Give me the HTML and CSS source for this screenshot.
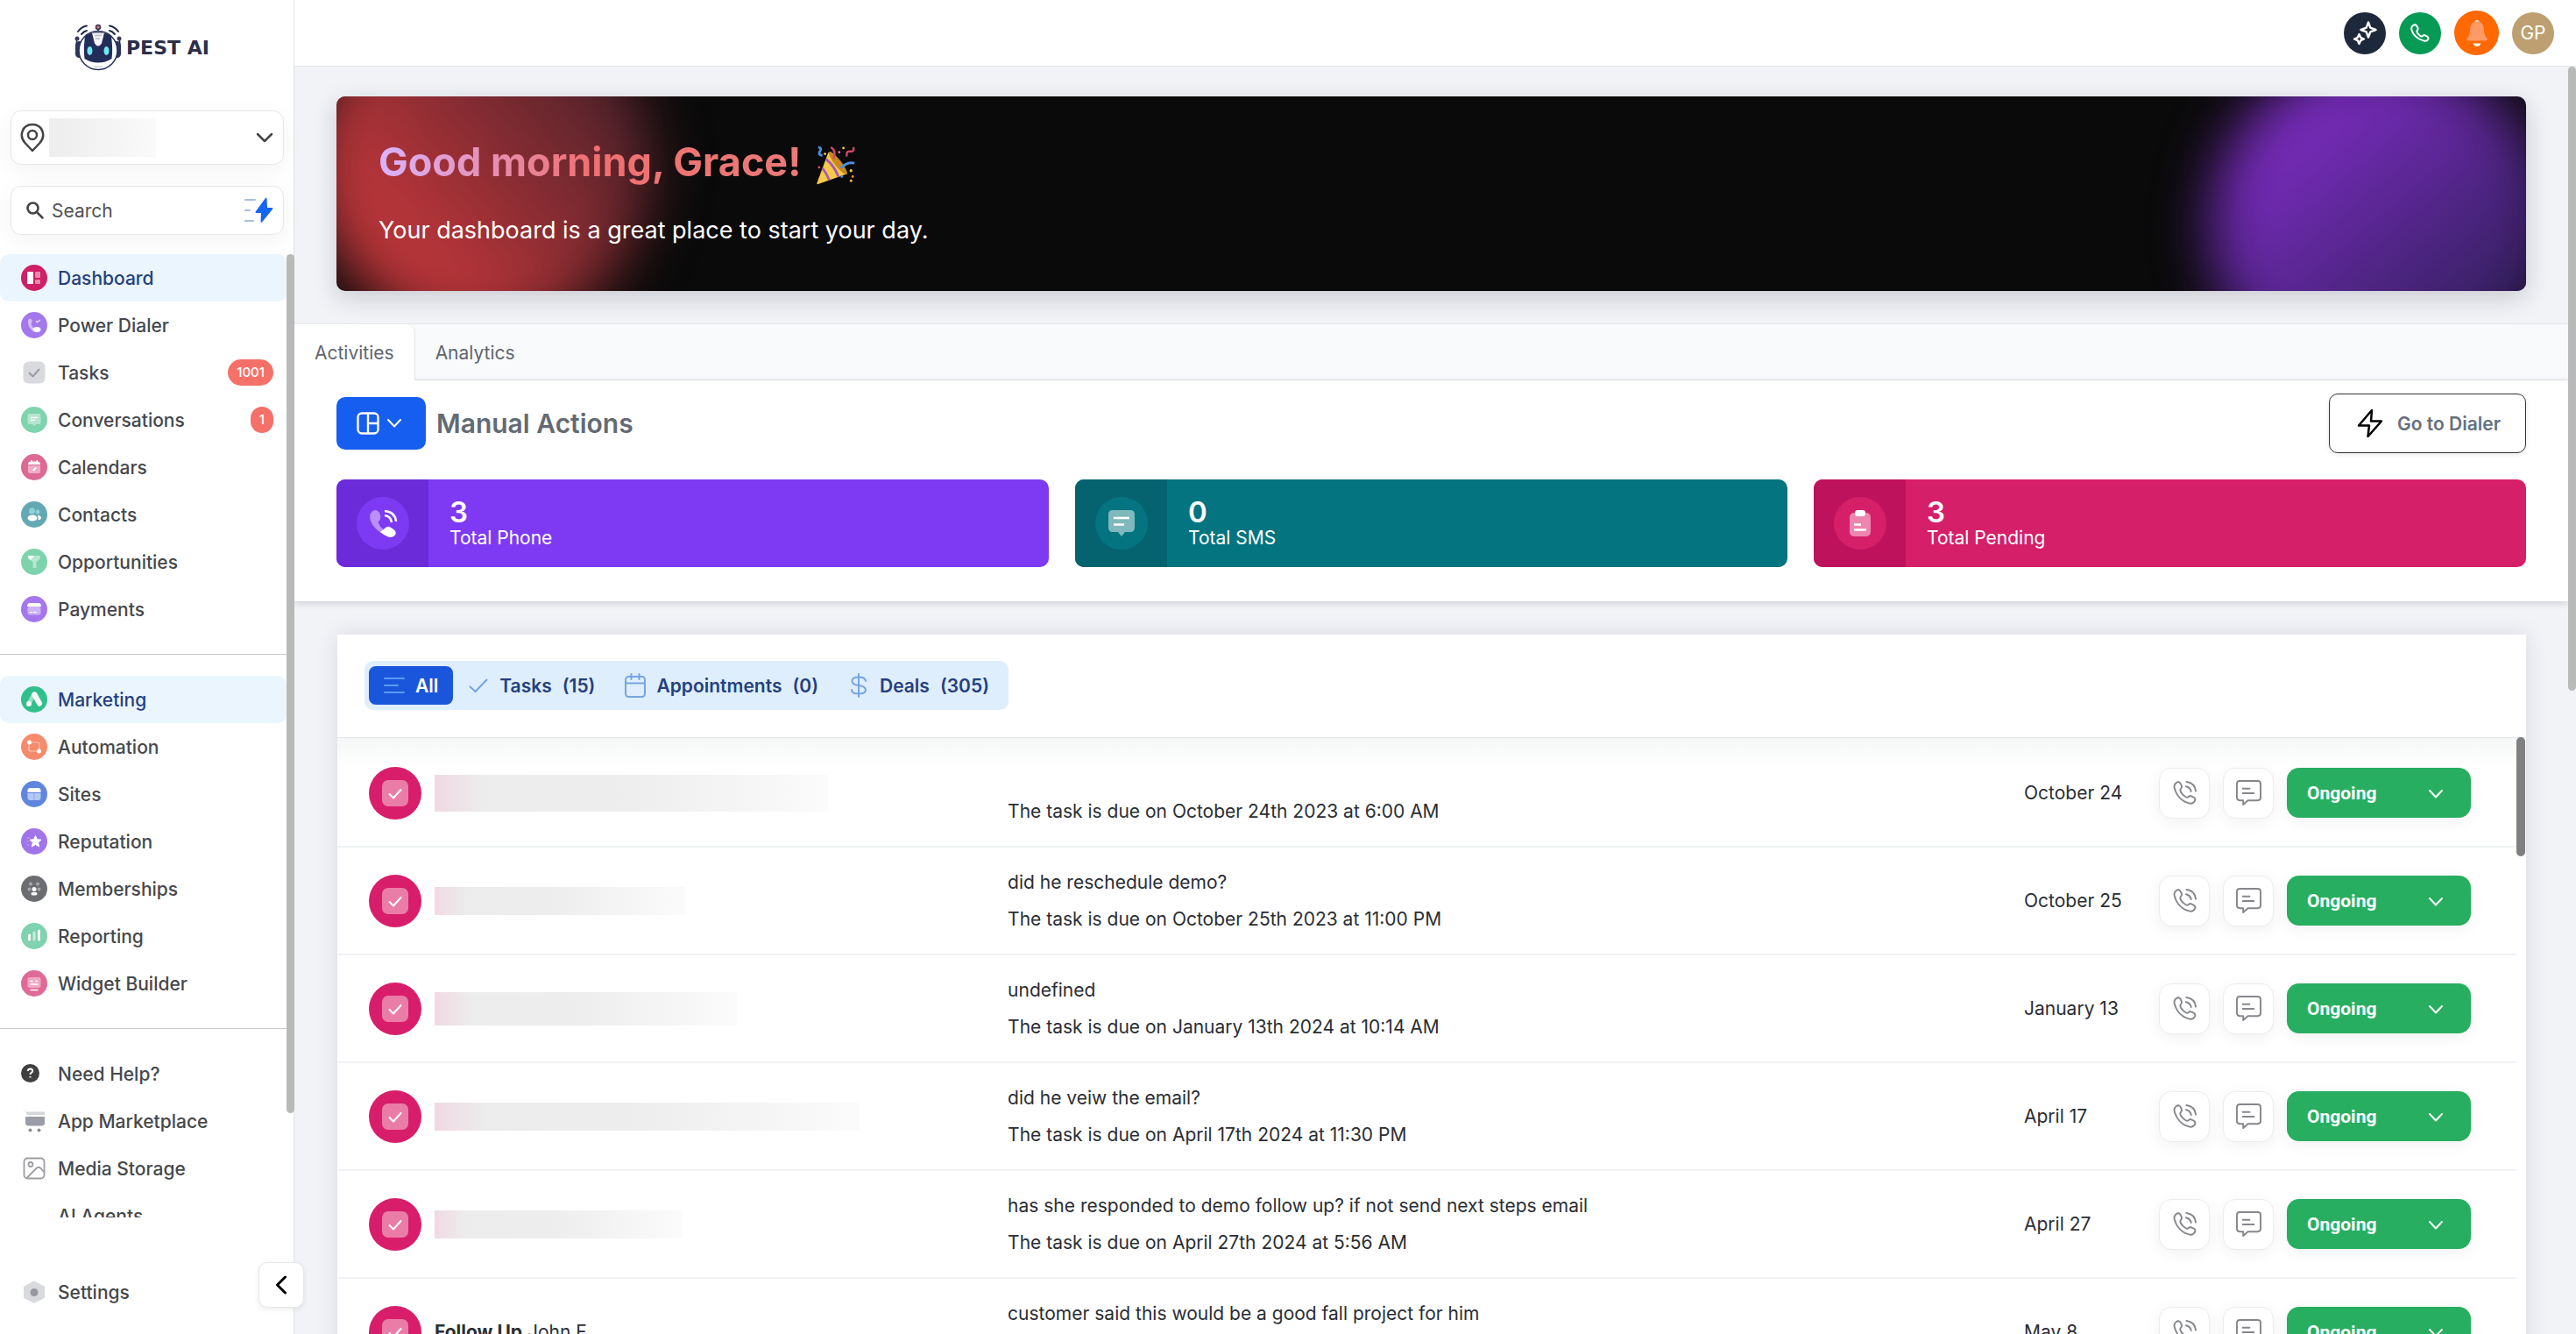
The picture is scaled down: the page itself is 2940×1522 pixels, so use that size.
FILE: index.html
```html
<!DOCTYPE html>
<html lang="en">
<head>
    <meta charset="UTF-8">
    <meta name="viewport" content="width=device-width, initial-scale=1.0">
    <title>Pest AI - Dashboard</title>
    <link rel="stylesheet" href="styles.css">
</head>
<body>
    <!-- Shared icons -->
    <svg class="sprite" aria-hidden="true">
        <symbol id="icon-task" viewBox="0 0 60 60">
            <circle cx="30" cy="30" r="30" fill="#d81e6b"/>
            <rect x="15" y="15" width="30" height="30" rx="7" fill="#ea7da7"/>
            <path d="M23.500 31l4.500 4.500 8.500-9.500" fill="none" stroke="#fff" stroke-width="2" stroke-linecap="round" stroke-linejoin="round"/>
        </symbol>
        <symbol id="icon-call" viewBox="0 0 30 30">
            <g fill="none" stroke="currentColor" stroke-width="2" stroke-linecap="round" stroke-linejoin="round">
                <path d="M4.500 3.500C7 1.500 9 2 10.300 4.800l1 2.300c.6 1.500-.3 2.300-1.200 3.300-.8 1-.6 2 0 3.300 1.300 2.700 3.400 4.800 6 6.200 1.300.7 2.300.8 3.200 0 1-.9 1.900-1.600 3.300-1l2.300 1.100c2.800 1.300 3.200 3.400 1.200 5.800-1.300 1.500-3.200 2.200-5.200 1.700C11.800 25.500 5 18.500 2.700 8.800c-.4-2 .3-4 1.800-5.300z"/>
                <path d="M17 2c6 .8 10.200 5 11 11M16.500 7.500c3.400.7 5.300 2.700 6 6"/>
            </g>
        </symbol>
        <symbol id="icon-chat" viewBox="0 0 30 30">
            <g fill="none" stroke="currentColor" stroke-width="2" stroke-linecap="round" stroke-linejoin="round">
                <path d="M4.500 1h21Q29 1 29 4.500v16q0 3.500-3.500 3.500H14l-5.500 5v-5h-4Q1 24 1 20.500v-16Q1 1 4.500 1z"/>
                <path d="M8 10h8M8 15.500h13"/>
            </g>
        </symbol>
        <symbol id="icon-down" viewBox="0 0 18 12">
            <path d="M2 2l7 7.500L16 2" fill="none" stroke="currentColor" stroke-width="2" stroke-linecap="round" stroke-linejoin="round"/>
        </symbol>
    </svg>

    <aside class="sidebar">
        <div class="logo">
            <svg width="54" height="54" viewBox="0 0 54 54" aria-hidden="true">
                <g fill="none" stroke="#232b4d" stroke-width="2" stroke-linecap="round">
                    <path d="M4 9Q8 3.500 14 2.500M8 12q3-3.500 6-4M50 9Q46 3.500 40 2.500M46 12q-3-3.500-6-4"/>
                    <path d="M2.500 17v6M51.500 17v6M27 5v4" stroke-width="1.500"/>
                </g>
                <circle cx="27" cy="4" r="2.500" fill="#c97b6a" stroke="#3b3350" stroke-width="1.500"/>
                <circle cx="3" cy="17" r="2.500" fill="#3f3a58"/>
                <circle cx="51" cy="17" r="2.500" fill="#3f3a58"/>
                <rect x="1" y="20" width="9" height="19" rx="4.500" fill="#2b3560"/>
                <rect x="44" y="20" width="9" height="19" rx="4.500" fill="#2b3560"/>
                <ellipse cx="27" cy="30.500" rx="22" ry="22" fill="#fff" stroke="#2a3358" stroke-width="1.600"/>
                <path d="M12 14.500Q18 9.500 27 9.500T42 14.500Q44 28 42.500 40 35 44.500 27 44.500T11.500 40Q10 28 12 14.500z" fill="#232d59"/>
                <path d="M20 10.500h14l-3 12q-4 6-8 0z" fill="#f4f5f8"/>
                <path d="M23 13.500h8M24 17h5" stroke="#b9bdc9" stroke-width="1.500"/>
                <ellipse cx="17.500" cy="31" rx="3" ry="5" fill="#6fe6f0"/>
                <ellipse cx="36.500" cy="31" rx="3" ry="5" fill="#6fe6f0"/>
                <path d="M22 49h10" stroke="#c9ccd6" stroke-width="1.500"/>
            </svg>
            <span>PEST AI</span>
        </div>

        <button class="box location" aria-label="Switch location">
            <svg width="28" height="34" viewBox="0 0 28 34" fill="none" stroke="#454545" stroke-width="2.500" stroke-linejoin="round" aria-hidden="true">
                <path d="M14 32L5.500 23C-1.500 15.500 2 2 14 2s15.500 13.500 8.500 21z"/>
                <circle cx="14" cy="14" r="5"/>
            </svg>
            <span class="location-name"></span>
            <svg width="20" height="12" viewBox="0 0 20 12" fill="none" stroke="#454545" stroke-width="2.500" stroke-linecap="round" stroke-linejoin="round" aria-hidden="true"><path d="M2 2l8 8 8-8"/></svg>
        </button>

        <div class="box search">
            <svg width="20" height="20" viewBox="0 0 20 20" fill="none" stroke="#454545" stroke-width="2.500" stroke-linecap="round" aria-hidden="true"><circle cx="7.500" cy="7.500" r="6"/><path d="M12 12l6.500 6.500"/></svg>
            <input type="text" placeholder="Search" aria-label="Search">
            <button class="quick" aria-label="Quick actions">
                <svg width="34" height="30" viewBox="0 0 34 30" aria-hidden="true">
                    <path d="M2 3h11M2 15h5M2 27h9" stroke="#a9bdd8" stroke-width="2" stroke-linecap="round"/>
                    <path d="M25 1q1-1 1.500.5L27 12h5.500q1.500.3.7 1.500L21 28.500q-1.300.8-1.500-.5L20 18h-5.500q-1.600-.4-.8-1.600z" fill="#1266f1"/>
                </svg>
            </button>
        </div>

        <div class="menu-wrap">
            <nav class="menu">
                <a href="#" class="active">
                    <svg viewBox="0 0 30 30"><circle cx="15" cy="15" r="15" fill="#cf1f66"/><rect x="7" y="8" width="7" height="14" rx="1" fill="#fff"/><rect x="16" y="8" width="6" height="7" rx="1" fill="#ea87af"/><rect x="16" y="17" width="6" height="5" rx="1" fill="#ea87af"/></svg>
                    Dashboard
                </a>
                <a href="#">
                    <svg viewBox="0 0 30 30"><circle cx="15" cy="15" r="15" fill="#a477ee"/><path d="M8 9q3-3 4.500.5.800 2-1 3.500Q12 17 15.500 19l-1 3Q7 18 8 9z" fill="#d4bef8"/><ellipse cx="18" cy="20" rx="4.500" ry="3" fill="#fff"/><path d="M17 10l1.500 1.500L22 9" fill="none" stroke="#e6d9fc" stroke-width="1.500"/></svg>
                    Power Dialer
                </a>
                <a href="#">
                    <svg viewBox="0 0 30 30"><rect x="2.500" y="2.500" width="25" height="25" rx="6" fill="#d9dade"/><path d="M9.500 15.500l4 4 7-8" fill="none" stroke="#9a9ca3" stroke-width="2" stroke-linecap="round" stroke-linejoin="round"/></svg>
                    Tasks
                    <span class="badge">1001</span>
                </a>
                <a href="#">
                    <svg viewBox="0 0 30 30"><circle cx="15" cy="15" r="15" fill="#7fd3ae"/><path d="M10 8h10q2.500 0 2.500 2.500v7Q22.500 20 20 20h-3l-2 2-2-2h-3q-2.500 0-2.500-2.500v-7Q7.500 8 10 8z" fill="#b3e6cf"/><path d="M11 12.500h8M11 15.500h5" stroke="#fff" stroke-width="1.500"/></svg>
                    Conversations
                    <span class="badge">1</span>
                </a>
                <a href="#">
                    <svg viewBox="0 0 30 30"><circle cx="15" cy="15" r="15" fill="#dc6a94"/><path d="M8 13h14v7q0 2-2 2H10q-2 0-2-2z" fill="#eeadc5"/><path d="M8 12q0-3.500 3-3.500h8q3 0 3 3.500zM11 7h1.500v3H11zM17.500 7H19v3h-1.500z" fill="#fff"/><path d="M14 19l3-3.500" stroke="#fff" stroke-width="2"/></svg>
                    Calendars
                </a>
                <a href="#">
                    <svg viewBox="0 0 30 30"><circle cx="15" cy="15" r="15" fill="#63a9b4"/><circle cx="12.500" cy="11" r="3.500" fill="#8fd0da"/><circle cx="19" cy="12" r="2.500" fill="#8fd0da"/><ellipse cx="13" cy="19" rx="5.500" ry="3.500" fill="#fff"/><path d="M19 15.500q4.500 1.500 4 3.500t-3.500 2.500q.500-3-.5-6z" fill="#fff"/></svg>
                    Contacts
                </a>
                <a href="#">
                    <svg viewBox="0 0 30 30"><circle cx="15" cy="15" r="15" fill="#7dd3ac"/><path d="M8 8h14l-.5 4-4 3v7h-4v-7L9 12z" fill="#b5e8d0"/><path d="M8 8h7l-4 5-2.500-2z" fill="#fff"/></svg>
                    Opportunities
                </a>
                <a href="#">
                    <svg viewBox="0 0 30 30"><circle cx="15" cy="15" r="15" fill="#a477ee"/><rect x="7.500" y="12" width="15" height="9.500" rx="2.500" fill="#cdb4f7"/><path d="M7 12q0-4 3-4h10q3 0 3 4z" fill="#fff"/><path d="M10 18.500h3M14 18.500h4" stroke="#fff"/></svg>
                    Payments
                </a>
                <hr>
                <a href="#" class="active">
                    <svg viewBox="0 0 30 30"><circle cx="15" cy="15" r="15" fill="#31c08c"/><path d="M15 9L9.500 18.500" stroke="#98e0c6" stroke-width="5" stroke-linecap="round"/><path d="M15.500 9.500l5.500 10" stroke="#fff" stroke-width="6" stroke-linecap="round"/><circle cx="9" cy="20" r="3" fill="#fff"/></svg>
                    Marketing
                </a>
                <a href="#">
                    <svg viewBox="0 0 30 30"><circle cx="15" cy="15" r="15" fill="#f58b6c"/><path d="M9 10v8q0 2 2 2h8M11 10h8q2 0 2 2v8" fill="none" stroke="#fbc5b5" stroke-width="1.200"/><circle cx="9.500" cy="10" r="2.500" fill="#fff"/><circle cx="20.500" cy="20" r="2.500" fill="#fff"/></svg>
                    Automation
                </a>
                <a href="#">
                    <svg viewBox="0 0 30 30"><circle cx="15" cy="15" r="15" fill="#5f86de"/><path d="M7.500 14h15v5q0 3-3 3h-9q-3 0-3-3z" fill="#b4c8f2"/><path d="M7.500 13v-2q0-3 3-3h9q3 0 3 3v2z" fill="#fff"/><path d="M15 14v8" stroke="#8ea9e8"/></svg>
                    Sites
                </a>
                <a href="#">
                    <svg viewBox="0 0 30 30"><circle cx="15" cy="15" r="15" fill="#a075ea"/><path d="M16.500 8.500l1.900 4.200 4.600.5-3.400 3.100 1 4.600-4.100-2.400-4.100 2.400 1-4.600-3.400-3.100 4.600-.5z" fill="#fff" stroke="#fff" stroke-linejoin="round"/><path d="M7 11h3M6.500 15h2M7 19h2.500" stroke="#c5a9f5"/></svg>
                    Reputation
                </a>
                <a href="#">
                    <svg viewBox="0 0 30 30"><circle cx="15" cy="15" r="15" fill="#6c6d70"/><g fill="#a6a7aa"><circle cx="11" cy="9.500" r="2"/><circle cx="19" cy="9.500" r="2"/><circle cx="9.500" cy="15.500" r="2"/><circle cx="20.500" cy="15.500" r="2"/></g><circle cx="15" cy="15.500" r="2.500" fill="#fff"/><rect x="11.500" y="19" width="7" height="3.500" rx="1.700" fill="#fff"/></svg>
                    Memberships
                </a>
                <a href="#">
                    <svg viewBox="0 0 30 30"><circle cx="15" cy="15" r="15" fill="#80d2b0"/><path d="M9.500 14v5" stroke="#fff" stroke-width="3" stroke-linecap="round"/><path d="M15 11v8" stroke="#c6eddc" stroke-width="3" stroke-linecap="round"/><path d="M20.500 9v10" stroke="#fff" stroke-width="3" stroke-linecap="round"/></svg>
                    Reporting
                </a>
                <a href="#">
                    <svg viewBox="0 0 30 30"><circle cx="15" cy="15" r="15" fill="#df6a97"/><rect x="7.500" y="8" width="15" height="12" rx="2.500" fill="#efa7c2"/><path d="M10.500 12.500h3M16 12.500h3M10.500 16h9M10.500 22.500h9" stroke="#fff" stroke-width="1.500"/></svg>
                    Widget Builder
                </a>
                <hr>
                <a href="#">
                    <svg viewBox="0 0 30 30"><circle cx="10.500" cy="14.500" r="10.500" fill="#404040"/><path d="M7.800 12q.2-2.500 2.700-2.500t2.700 2.300q0 1.300-1.500 2.200-1.200.6-1.200 2M10.500 18v1.500" fill="none" stroke="#fff" stroke-width="2"/></svg>
                    Need Help?
                </a>
                <a href="#">
                    <svg viewBox="0 0 30 30"><path d="M2 2.500h2q1.500.500 2 2.500l.5 3H27V4.500H7" fill="#d3d5d9"/><path d="M5 10h22v7q0 3.500-3.500 3.500h-15Q5 20.500 5 17z" fill="#9a9ca8"/><circle cx="10.500" cy="25.500" r="2" fill="#8a8c92"/><circle cx="20.500" cy="25.500" r="2" fill="#8a8c92"/></svg>
                    App Marketplace
                </a>
                <a href="#">
                    <svg viewBox="0 0 30 30" fill="none" stroke="#9c9da1" stroke-width="1.800"><rect x="3.500" y="3.500" width="23" height="23" rx="4"/><circle cx="11" cy="10.500" r="2.500"/><path d="M6.500 26L18 14.500q2-1.500 4 0l4.500 5"/></svg>
                    Media Storage
                </a>
                <a href="#">
                    <svg viewBox="0 0 30 30"></svg>
                    AI Agents
                </a>
            </nav>
            <div class="scroll-thumb menu-thumb"></div>
        </div>

        <div class="menu settings">
            <a href="#">
                <svg viewBox="0 0 30 30"><path d="M15 3l11.500 6v12.500L15 27.500 3.500 21.500V9z" fill="#d9dade" stroke="#d9dade" stroke-linejoin="round"/><circle cx="15" cy="15.500" r="4.500" fill="#98999e"/></svg>
                Settings
            </a>
        </div>
        <button class="collapse" aria-label="Collapse sidebar">
            <svg width="14" height="22" viewBox="0 0 14 22" fill="none" stroke="#000" stroke-width="3" stroke-linecap="round" stroke-linejoin="round"><path d="M11.500 2L2.500 11l9 9"/></svg>
        </button>
    </aside>

    <div class="main">
        <header class="topbar">
            <button class="round dark" aria-label="AI assistant">
                <svg width="28" height="28" viewBox="0 0 28 28" fill="none" stroke="#fff" stroke-width="2.400" stroke-linejoin="round"><path d="M18 1.500l2.300 6.200L26.500 10l-6.200 2.300L18 18.500l-2.300-6.200L9.500 10l6.200-2.300zM7.500 15l1.700 3.800L13 20.500l-3.800 1.700L7.500 26l-1.700-3.800L2 20.500l3.800-1.700z"/></svg>
            </button>
            <button class="round green" aria-label="Phone">
                <svg width="22" height="22" viewBox="0 0 22 22" fill="none" stroke="#fff" stroke-width="2" stroke-linejoin="round"><path d="M3 2q3-2 4.500 1l1 2q.6 1.500-.8 2.700Q7 9 8 10.500q1.500 2.500 4 3.800 1.300.7 2.300-.4 1-1.200 2.400-.6l2.300 1.200q2.500 1.500.8 3.800-1.600 2-4.300 1.300Q4 16.500 1.200 6.500.8 3.500 3 2z"/></svg>
            </button>
            <button class="round orange" aria-label="Notifications">
                <svg width="26" height="32" viewBox="0 0 26 32"><path d="M13 1q2.500 0 2.500 1.800Q21 5 21 12q0 6 3.500 10 .8 2.500-2 2.500h-19q-2.800 0-2-2.500Q5 18 5 12q0-7 5.500-9.200Q10.500 1 13 1z" fill="#ff9a66"/><path d="M10.500 2.500Q11 1 13 1t2.500 1.500zM8.500 27.500h9Q16 31 13 31t-4.500-3.500z" fill="#fff"/></svg>
            </button>
            <button class="round tan">GP</button>
        </header>

        <div class="page">
            <section class="banner">
                <div class="glow glow-red"></div>
                <div class="glow glow-purple"></div>
                <h1>
                    <span>Good morning, Grace!</span>
                    <svg width="46" height="46" viewBox="0 0 48 48" aria-hidden="true">
                        <path d="M15 8Q27 18 37 34L3 46q-2 .5-1.500-1.500z" fill="#f7c948"/>
                        <path d="M12 16q10 8 15 21M8 27q5 6 8 14" fill="none" stroke="#a75bb5" stroke-width="3"/>
                        <ellipse cx="26.500" cy="21" rx="4" ry="17" transform="rotate(-38 26.500 21)" fill="#c98a1c"/>
                        <path d="M3 2q5 1 2 5t3 5M30 27q7-8 16-6" fill="none" stroke="#4a8fe0" stroke-width="3"/>
                        <path d="M18 2q7 4 3 14M45 2q1 6-4 5t-4 6" fill="none" stroke="#d8486a" stroke-width="2.500"/>
                        <circle cx="11" cy="10" r="1.500" fill="#f7c948"/><circle cx="28" cy="8" r="1.500" fill="#ee6a9a"/><circle cx="4" cy="26" r="1.500" fill="#d8486a"/><circle cx="42" cy="30" r="1.700" fill="#f7c948"/><circle cx="44" cy="37" r="1.500" fill="#ee8a3a"/><circle cx="42" cy="42" r="1.500" fill="#f7c948"/><circle cx="33" cy="3" r="1.500" fill="#f7c948"/><circle cx="31" cy="37" r="1.500" fill="#4a8fe0"/>
                    </svg>
                </h1>
                <p>Your dashboard is a great place to start your day.</p>
            </section>

            <nav class="tabs">
                <a href="#" class="current">Activities</a>
                <a href="#">Analytics</a>
            </nav>

            <section class="actions">
                <div class="actions-head">
                    <button class="layout-btn" aria-label="Change layout">
                        <svg width="26" height="26" viewBox="0 0 26 26" fill="none" stroke="#fff" stroke-width="2.400"><rect x="1.500" y="1.500" width="23" height="23" rx="4.500"/><path d="M13 1.500v23M13 13h11.500"/></svg>
                        <svg width="18" height="12"><use href="#icon-down"/></svg>
                    </button>
                    <h2>Manual Actions</h2>
                    <button class="dialer-btn">
                        <svg width="30" height="34" viewBox="0 0 30 34" fill="none" stroke="#000" stroke-width="2.500" stroke-linejoin="round" aria-hidden="true"><path d="M17 2L2 19.500h12L12.500 32 28 14.500H16z"/></svg>
                        Go to Dialer
                    </button>
                </div>
                <div class="stats">
                    <div class="stat stat-phone">
                        <div class="stat-icon">
                            <svg viewBox="0 0 60 60"><path d="M16.500 18q3-4.500 7-2.500 3 2 4 7 0 3-3 6.500 2 5 6 8l-3 4Q15 32 15 22q0-2.500 1.500-4z" fill="#b98ff8"/><path d="M27 40l5.500-4.500q3-3 6-1l4.500 3q3.500 3.500 0 7-3.500 2.500-8 .5-5-2-8-5z" fill="#fff"/><path d="M32 16q12 1 13 12M32 21q7 1 8 8" fill="none" stroke="#fff" stroke-width="2.500"/></svg>
                        </div>
                        <div class="stat-text"><strong>3</strong><span>Total Phone</span></div>
                    </div>
                    <div class="stat stat-sms">
                        <div class="stat-icon">
                            <svg viewBox="0 0 60 60"><path d="M20 15h20q5 0 5 5v15q0 5-5 5h-6l-4 5-4-5h-6q-5 0-5-5V20q0-5 5-5z" fill="#7fb8bd"/><path d="M21 24h18M21 31.500h12" stroke="#fff" stroke-width="2.500"/></svg>
                        </div>
                        <div class="stat-text"><strong>0</strong><span>Total SMS</span></div>
                    </div>
                    <div class="stat stat-pending">
                        <div class="stat-icon">
                            <svg viewBox="0 0 60 60"><rect x="18" y="18" width="24" height="27" rx="5" fill="#ed86af"/><rect x="24" y="15" width="12" height="7" rx="3" fill="#fff"/><path d="M23 31.500h8M23 37.500h14" stroke="#fff" stroke-width="2.500"/></svg>
                        </div>
                        <div class="stat-text"><strong>3</strong><span>Total Pending</span></div>
                    </div>
                </div>
            </section>

            <section class="feed">
                <div class="feed-head">
                    <div class="filters">
                        <button class="selected">
                            <svg viewBox="0 0 24 24"><path d="M1 4h22M1 12h15M1 20h22" stroke="#5a9bf5" stroke-width="2" stroke-linecap="round"/></svg>
                            <span>All</span>
                        </button>
                        <button>
                            <svg viewBox="0 0 24 24" fill="none" stroke="#74a5e0" stroke-width="2"><path d="M2 13l6.500 6L22 5"/></svg>
                            <span>Tasks</span><span>(15)</span>
                        </button>
                        <button>
                            <svg viewBox="0 0 24 28" fill="none" stroke="#74a5e0" stroke-width="2" stroke-linecap="round"><rect x="1" y="4" width="22" height="23" rx="3.500"/><path d="M1 11.500h22M7.500 1v6M16.500 1v6"/></svg>
                            <span>Appointments</span><span>(0)</span>
                        </button>
                        <button>
                            <svg viewBox="0 0 24 28" fill="none" stroke="#74a5e0" stroke-width="2" stroke-linecap="round"><path d="M12 1v26M20 9q-.5-4.500-8-4.500T4.500 9q0 4 7.500 5t8 5q0 4.500-8 4.500T4 19"/></svg>
                            <span>Deals</span><span>(305)</span>
                        </button>
                    </div>
                </div>

                <ul class="tasks">
                    <li class="task">
                        <div class="who"><svg class="task-icon"><use href="#icon-task"/></svg><span class="hidden-name name-1"></span></div>
                        <div class="note"><p></p><p>The task is due on October 24th 2023 at 6:00 AM</p></div>
                        <time>October 24</time>
                        <div class="controls">
                            <button aria-label="Call"><svg><use href="#icon-call"/></svg></button>
                            <button aria-label="Message"><svg><use href="#icon-chat"/></svg></button>
                            <div class="status"><select aria-label="Status"><option>Ongoing</option><option>Done</option></select><svg><use href="#icon-down"/></svg></div>
                        </div>
                    </li>
                    <li class="task">
                        <div class="who"><svg class="task-icon"><use href="#icon-task"/></svg><span class="hidden-name name-2"></span></div>
                        <div class="note"><p>did he reschedule demo?</p><p>The task is due on October 25th 2023 at 11:00 PM</p></div>
                        <time>October 25</time>
                        <div class="controls">
                            <button aria-label="Call"><svg><use href="#icon-call"/></svg></button>
                            <button aria-label="Message"><svg><use href="#icon-chat"/></svg></button>
                            <div class="status"><select aria-label="Status"><option>Ongoing</option><option>Done</option></select><svg><use href="#icon-down"/></svg></div>
                        </div>
                    </li>
                    <li class="task">
                        <div class="who"><svg class="task-icon"><use href="#icon-task"/></svg><span class="hidden-name name-3"></span></div>
                        <div class="note"><p>undefined</p><p>The task is due on January 13th 2024 at 10:14 AM</p></div>
                        <time>January 13</time>
                        <div class="controls">
                            <button aria-label="Call"><svg><use href="#icon-call"/></svg></button>
                            <button aria-label="Message"><svg><use href="#icon-chat"/></svg></button>
                            <div class="status"><select aria-label="Status"><option>Ongoing</option><option>Done</option></select><svg><use href="#icon-down"/></svg></div>
                        </div>
                    </li>
                    <li class="task">
                        <div class="who"><svg class="task-icon"><use href="#icon-task"/></svg><span class="hidden-name name-4"></span></div>
                        <div class="note"><p>did he veiw the email?</p><p>The task is due on April 17th 2024 at 11:30 PM</p></div>
                        <time>April 17</time>
                        <div class="controls">
                            <button aria-label="Call"><svg><use href="#icon-call"/></svg></button>
                            <button aria-label="Message"><svg><use href="#icon-chat"/></svg></button>
                            <div class="status"><select aria-label="Status"><option>Ongoing</option><option>Done</option></select><svg><use href="#icon-down"/></svg></div>
                        </div>
                    </li>
                    <li class="task">
                        <div class="who"><svg class="task-icon"><use href="#icon-task"/></svg><span class="hidden-name name-5"></span></div>
                        <div class="note"><p>has she responded to demo follow up? if not send next steps email</p><p>The task is due on April 27th 2024 at 5:56 AM</p></div>
                        <time>April 27</time>
                        <div class="controls">
                            <button aria-label="Call"><svg><use href="#icon-call"/></svg></button>
                            <button aria-label="Message"><svg><use href="#icon-chat"/></svg></button>
                            <div class="status"><select aria-label="Status"><option>Ongoing</option><option>Done</option></select><svg><use href="#icon-down"/></svg></div>
                        </div>
                    </li>
                    <li class="task">
                        <div class="who"><svg class="task-icon"><use href="#icon-task"/></svg><span><b>Follow Up</b> John F</span></div>
                        <div class="note"><p>customer said this would be a good fall project for him</p><p></p></div>
                        <time>May 8</time>
                        <div class="controls">
                            <button aria-label="Call"><svg><use href="#icon-call"/></svg></button>
                            <button aria-label="Message"><svg><use href="#icon-chat"/></svg></button>
                            <div class="status"><select aria-label="Status"><option>Ongoing</option><option>Done</option></select><svg><use href="#icon-down"/></svg></div>
                        </div>
                    </li>
                </ul>
                <div class="scroll-thumb feed-thumb"></div>
            </section>
            <div class="scroll-thumb page-thumb"></div>
        </div>
    </div>
</body>
</html>
```
FILE: styles.css
```css
* {
  margin: 0;
  padding: 0;
  box-sizing: border-box;
}
body {
  font-family: Inter, "Liberation Sans", sans-serif;
  font-size: 21px;
  color: #2a2e34;
  background-color: #f2f3f7;
  height: 100vh;
  display: flex;
  overflow: hidden;
}
a {
  text-decoration: none;
  color: inherit;
}
button, input, select {
  font-family: inherit;
  font-size: inherit;
  color: inherit;
  border: none;
  background: none;
}
button {
  cursor: pointer;
}
.sprite {
  display: none;
}
.scroll-thumb {
  position: absolute;
  right: 0;
  top: 0;
  width: 9px;
  border-radius: 5px;
  background-color: #b9b9b9;
}

/* Sidebar */
.sidebar {
  width: 336px;
  flex-shrink: 0;
  height: 100vh;
  display: flex;
  flex-direction: column;
  background-color: #fff;
  border-right: 1px solid #e3e4e8;
  position: relative;
  z-index: 2;
}
.logo {
  display: flex;
  align-items: center;
  gap: 5px;
  padding: 27px 0 45px 85px;
  font-family: "DejaVu Sans", sans-serif;
  font-size: 22px;
  font-weight: bold;
  color: #2b2f4a;
}
.box {
  display: flex;
  align-items: center;
  margin: 0 11px 0 12px;
  border: 1px solid #e6e7ea;
  border-radius: 12px;
  background-color: #fff;
  box-shadow: 0 6px 24px rgba(0, 0, 0, 0.05);
}
.location {
  height: 62px;
  padding: 0 11px 0 10px;
  gap: 5px;
}
.location-name {
  width: 122px;
  height: 44px;
  margin-right: auto;
  background: linear-gradient(to right, #ededed, #fafafa);
}
.search {
  height: 56px;
  margin-top: 24px;
  padding: 0 11px 0 17px;
  gap: 9px;
}
.search input {
  flex: 1;
  min-width: 0;
  outline: none;
}
.search input::placeholder {
  color: #505256;
  opacity: 1;
}
.quick {
  display: flex;
}
.menu-wrap {
  position: relative;
  margin-top: 22px;
  margin-right: -1px;
  flex: 1;
  overflow: hidden;
}
.menu-thumb {
  height: 980px;
}
.menu a {
  display: flex;
  align-items: center;
  gap: 12px;
  height: 54px;
  margin-right: 9px;
  padding: 0 15px 0 24px;
  border-radius: 10px;
  font-weight: 500;
  color: #46484c;
}
.menu a svg {
  width: 30px;
  height: 30px;
}
.menu a.active {
  background-color: #ebf5fe;
  color: #24407f;
}
.menu hr {
  border: none;
  border-top: 1px solid #c6c8cb;
  margin: 24px 9px 24px 0;
}
.badge {
  margin-left: auto;
  height: 30px;
  padding: 0 10px;
  border-radius: 15px;
  font-size: 15px;
  line-height: 30px;
  color: #fff;
  background-color: #f57068;
}
.settings {
  padding: 58px 0 21px;
}
.collapse {
  position: absolute;
  right: -12px;
  bottom: 30px;
  width: 52px;
  height: 52px;
  display: flex;
  align-items: center;
  justify-content: center;
  border: 1px solid #e6e7ea;
  border-radius: 10px;
  background-color: #fff;
  box-shadow: 0 2px 6px rgba(0, 0, 0, 0.08);
}

/* Top bar */
.main {
  flex: 1;
  min-width: 0;
  height: 100vh;
  display: flex;
  flex-direction: column;
}
.topbar {
  height: 76px;
  flex-shrink: 0;
  display: flex;
  align-items: center;
  justify-content: flex-end;
  gap: 15px;
  padding-right: 25px;
  background-color: #fff;
  border-bottom: 1px solid #e1e3e8;
}
.round {
  width: 48px;
  height: 48px;
  display: flex;
  align-items: center;
  justify-content: center;
  border-radius: 50%;
  color: #fff;
}
.dark {
  background-color: #1d293b;
}
.green {
  background-color: #069a55;
}
.orange {
  width: 51px;
  height: 51px;
  background-color: #ff6900;
}
.tan {
  background-color: #bd9f71;
}

/* Greeting */
.page {
  position: relative;
  flex: 1;
  min-height: 0;
  padding-right: 9px;
  overflow: hidden;
}
.page-thumb {
  height: 712px;
}
.banner {
  position: relative;
  margin: 34px 48px 37px;
  padding: 48px;
  height: 222px;
  border-radius: 10px;
  overflow: hidden;
  color: #fff;
  background-color: #0a0a0a;
  box-shadow: 0 8px 28px rgba(20, 20, 40, 0.18);
}
.glow {
  position: absolute;
  width: 390px;
  height: 390px;
  border-radius: 50%;
  filter: blur(32px);
}
.glow-red {
  left: -30px;
  top: -120px;
  background: linear-gradient(50deg, #b73539 30%, #4a212a 85%);
}
.glow-purple {
  right: -30px;
  top: -45px;
  background: linear-gradient(140deg, #7a2cbf 20%, #33205e 80%);
}
.banner h1 {
  position: relative;
  display: flex;
  align-items: flex-end;
  gap: 17px;
  font-size: 45px;
  line-height: 54px;
}
.banner h1 span {
  color: transparent;
  background: linear-gradient(to right, #d9b4ff, #ef7070 50%, #e97a78);
  background-clip: text;
  -webkit-background-clip: text;
}
.banner p {
  position: relative;
  margin-top: 24px;
  font-size: 27px;
  line-height: 54px;
}

/* Tabs */
.tabs {
  display: flex;
  height: 65px;
  border-top: 1px solid #e3e5e9;
  border-bottom: 1px solid #e3e5e9;
  background-color: #f9fafc;
}
.tabs a {
  display: flex;
  align-items: center;
  padding: 0 23px;
  height: 64px;
  color: #5f6670;
}
.tabs .current {
  border-right: 1px solid #e3e5e9;
  border-top-right-radius: 10px;
  background-color: #fff;
}

/* Manual actions */
.actions {
  padding: 15px 48px 39px;
  background-color: #fff;
  box-shadow: 0 2px 8px rgba(30, 40, 60, 0.18);
}
.actions-head {
  display: flex;
  align-items: center;
  gap: 12px;
  margin-bottom: 30px;
}
.actions-head h2 {
  margin-right: auto;
  font-size: 30px;
  font-weight: 600;
  color: #626a74;
}
.layout-btn {
  width: 102px;
  height: 60px;
  display: flex;
  align-items: center;
  justify-content: center;
  gap: 8px;
  padding-right: 4px;
  border-radius: 10px;
  color: #fff;
  background-color: #155eef;
}
.dialer-btn {
  height: 68px;
  display: flex;
  align-items: center;
  gap: 16px;
  padding: 0 28px 0 31px;
  border: 1px solid #333;
  border-radius: 10px;
  font-weight: 600;
  color: #66707e;
  box-shadow: 0 2px 6px rgba(0, 0, 0, 0.08);
}
.stats {
  display: grid;
  grid-template-columns: repeat(3, 1fr);
  gap: 30px;
}
.stat {
  display: flex;
  height: 100px;
  border-radius: 10px;
  overflow: hidden;
  color: #fff;
}
.stat-icon {
  width: 105px;
  display: flex;
  align-items: center;
  justify-content: center;
}
.stat-icon svg {
  width: 60px;
  height: 60px;
  border-radius: 50%;
}
.stat-text {
  display: flex;
  flex-direction: column;
  justify-content: center;
  padding-left: 24px;
}
.stat-text strong {
  font-size: 33px;
  font-weight: 600;
  line-height: 33px;
}
.stat-text span {
  line-height: 25px;
}
.stat-phone, .stat-phone svg {
  background-color: #7e3af2;
}
.stat-phone .stat-icon {
  background-color: #6c2bd9;
}
.stat-sms, .stat-sms svg {
  background-color: #047481;
}
.stat-sms .stat-icon {
  background-color: #05636f;
}
.stat-pending, .stat-pending svg {
  background-color: #d61f69;
}
.stat-pending .stat-icon {
  background-color: #bf125d;
}

/* Task feed */
.feed {
  position: relative;
  margin: 38px 48px 0 49px;
  background-color: #fff;
  box-shadow: 0 0 24px rgba(30, 40, 60, 0.12);
}
.feed-head {
  padding: 30px 31px 31px;
  border-bottom: 1px solid #e3e6e9;
}
.filters {
  display: inline-flex;
  padding: 6px 5px;
  border-radius: 10px;
  vertical-align: top;
  background-color: #dfeefc;
}
.filters button {
  display: flex;
  align-items: center;
  gap: 12px;
  height: 44px;
  padding: 0 17px;
  border-radius: 8px;
  font-weight: 600;
  color: #243f80;
}
.filters svg {
  width: 24px;
  height: 28px;
}
.filters .selected {
  color: #fff;
  background-color: #1a56db;
}
.tasks {
  list-style: none;
  padding-top: 2px;
  margin-right: 11px;
  background: linear-gradient(#f5f6f6, #fff 32px);
}
.feed-thumb {
  top: 117px;
  right: 1px;
  height: 136px;
  width: 10px;
  background-color: #808080;
}
.task {
  display: grid;
  grid-template-columns: 22fr 35fr 154px auto;
  align-items: center;
  height: 123px;
  padding: 0 52px 0 36px;
  border-bottom: 2px solid #f0f2f4;
}
.who {
  display: flex;
  align-items: center;
  gap: 15px;
}
.task-icon {
  width: 60px;
  height: 60px;
}
.hidden-name {
  height: 32px;
  background: linear-gradient(to right, #f0d9e3, #ececec 12%, #eeeeee 50%, #fbfbfb);
}
.name-1 {
  width: 449px;
  height: 42px;
}
.name-2 {
  width: 286px;
}
.name-3 {
  width: 345px;
  height: 38px;
}
.name-4 {
  width: 485px;
}
.name-5 {
  width: 283px;
}
.note p {
  height: 42px;
  line-height: 42px;
}
.controls {
  display: flex;
  align-items: center;
  gap: 15px;
}
.controls button {
  width: 58px;
  height: 58px;
  display: flex;
  align-items: center;
  justify-content: center;
  border: 1px solid #ececee;
  border-radius: 14px;
  color: #85878b;
  background-color: #fff;
  box-shadow: 0 4px 18px rgba(0, 0, 0, 0.06);
}
.controls button svg {
  width: 29px;
  height: 29px;
}
.status {
  position: relative;
  color: #fff;
}
.status select {
  display: block;
  width: 210px;
  height: 57px;
  padding: 0 23px;
  border-radius: 14px;
  appearance: none;
  font-family: Roboto, sans-serif;
  font-weight: bold;
  background-color: #27ae60;
  box-shadow: 0 4px 18px rgba(0, 0, 0, 0.06);
}
.status svg {
  position: absolute;
  right: 31px;
  top: 24px;
  width: 18px;
  height: 12px;
  pointer-events: none;
}
```
